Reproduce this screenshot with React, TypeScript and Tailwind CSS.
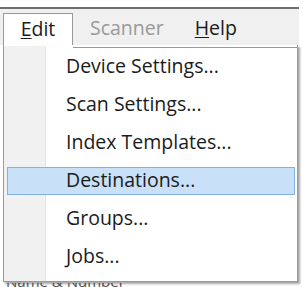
import React from "react";

const items = [
  "Device Settings...",
  "Scan Settings...",
  "Index Templates...",
  "Destinations...",
  "Groups...",
  "Jobs...",
];

const font = { fontFamily: '"Open Sans", "Noto Sans", sans-serif' };

export default function App() {
  return (
    <div
      className="h-[287px] w-[303px] overflow-hidden bg-white text-[19.5px] leading-none text-[#1b1b1b]"
      style={font}
    >
      <div className="h-[7px]" />
      {/* menu bar */}
      <div className="flex h-[38px] w-[299px] border-t-2 border-[#6e6e6e] bg-[#f0f0f0]">
        <div className="ml-[3px] mt-[4px] flex w-[70px] items-center justify-center border-l border-r border-t border-[#9a9a9a] bg-white pb-[2px]">
          <span>
            <span className="underline underline-offset-2">E</span>dit
          </span>
        </div>
        <div className="mt-[4px] flex items-center pb-[2px] pl-[17px] text-[#999]">
          Scanner
        </div>
        <div className="mt-[4px] flex items-center pb-[2px] pl-[31px]">
          <span>
            <span className="underline underline-offset-2">H</span>elp
          </span>
        </div>
      </div>
      {/* dropdown */}
      <div className="relative ml-[3px] w-[295px] border-b border-l border-r border-[#9a9a9a] bg-white pb-[5px] pt-[2px] shadow-[2px_2px_2px_rgba(0,0,0,0.35)]">
        <div className="ml-[69px] h-px bg-[#9a9a9a]" />
        <div className="absolute bottom-0 left-0 top-px flex w-[43px]">
          <div className="w-[41px] bg-[#f1f1f1]" />
          <div className="w-px bg-[#e2e3e3]" />
          <div className="w-px bg-white" />
        </div>
        <div className="relative">
          {items.map((label, i) => (
            <div key={label} className="px-[2px] py-[5px] pl-[3px]">
              <div
                className={
                  i === 3
                    ? "flex h-[28px] items-center border border-[#7fb3e8] bg-[#c8e0f8] pb-[2px] pl-[58px]"
                    : "flex h-[28px] items-center border border-transparent pb-[2px] pl-[58px]"
                }
              >
                {label}
              </div>
            </div>
          ))}
        </div>
      </div>
      <div className="mt-[1px] h-[5px] overflow-hidden pl-[6px] text-[15px] text-[#555]">
        <div className="-mt-[9px]">Name &amp; Number</div>
      </div>
    </div>
  );
}
